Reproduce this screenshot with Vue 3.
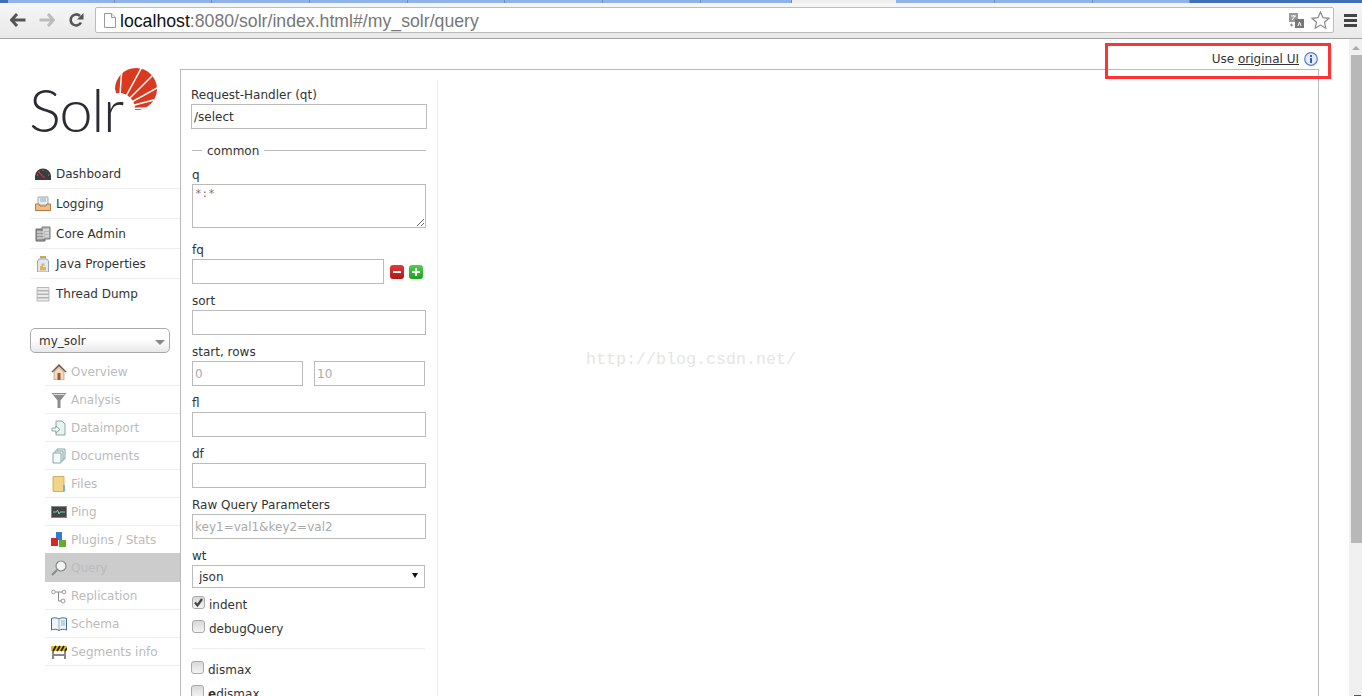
<template>
  <div class="page">
    <!-- browser chrome -->
    <div class="tabstrip">
      <span v-for="(t, i) in tabs" :key="i" class="tab" :class="t.kind" :style="{ width: t.w + 'px' }"></span>
    </div>
    <div class="toolbar">
      <svg class="tool" width="16" height="14" viewBox="0 0 16 14"><path d="M7 1 1.500 7 7 13M2 7h13.500" fill="none" stroke="#555" stroke-width="3"/></svg>
      <svg class="tool" width="16" height="14" viewBox="0 0 16 14"><path d="M9 1l5.500 6L9 13M14 7H.5" fill="none" stroke="#bbb" stroke-width="3"/></svg>
      <svg class="tool" width="16" height="16" viewBox="0 0 16 16"><path d="M13 10.500A5.500 5.500 0 1 1 12 4" fill="none" stroke="#555" stroke-width="2.600"/><path d="M15.500 1v6.500H9z" fill="#555"/></svg>
      <div class="omnibox">
        <svg width="12" height="15" viewBox="0 0 12 15"><path d="M.5.500h7l4 4v10H.5z" fill="#fff" stroke="#999"/><path d="M7.500.500v4h4" fill="#eee" stroke="#999"/></svg>
        <span class="url"><b>localhost</b>:8080/solr/index.html#/my_solr/query</span>
        <svg class="translate" width="15" height="15" viewBox="0 0 15 15"><rect x="0" y="0" width="9" height="9" fill="#999"/><rect x="6" y="6" width="9" height="9" fill="#777"/><path d="M2 3h5M4.500 2v1M3 7l3-4" stroke="#fff" fill="none"/><path d="M9 13l1.500-4 1.500 4" stroke="#fff" fill="none"/><path d="M1 12h3M2.500 10.500v3" stroke="#888"/></svg>
        <svg class="star" width="19" height="18" viewBox="0 0 19 18"><path d="M9.500 1l2.500 5.700 6 .6-4.500 4 1.300 5.900-5.300-3.100-5.300 3.100 1.300-5.900-4.500-4 6-.6z" fill="#fff" stroke="#888" stroke-width="1.200"/></svg>
      </div>
      <div class="menu"><i></i><i></i><i></i></div>
    </div>

    <div class="viewport">
      <div class="content">
        <div class="topbar">
          <span>Use <a>original UI</a></span>
          <svg width="14" height="14" viewBox="0 0 14 14"><circle cx="7" cy="7" r="6.300" fill="#e4ecfa" stroke="#5a7fd0" stroke-width="1.200"/><rect x="6" y="6" width="2" height="5" fill="#3a5fb0"/><rect x="6" y="3" width="2" height="2" fill="#3a5fb0"/></svg>
        </div>

        <div class="columns">
          <aside class="sidebar">
            <div class="logo">
              <svg class="sun" width="46" height="46" viewBox="0 0 46 46">
                <circle cx="23" cy="22" r="21" fill="#d9391f"/>
                <g stroke="#fff" stroke-width="1.500">
                  <path d="M6 42 9 0M6 42 30 -2M6 42 50 -2M6 42 60 12M6 42 60 28M6 42 60 40M6 42 -4 0"/>
                </g>
                <circle cx="6" cy="42" r="16" fill="#fff"/>
              </svg>
              <span class="logo-text">Solr</span>
            </div>

            <nav class="nav">
              <a v-for="item in mainNav" :key="item.label" class="nav-row">
                <svg width="16" height="16" viewBox="0 0 16 16" v-html="icons[item.icon]"></svg>
                {{ item.label }}
              </a>
            </nav>

            <div class="core-select">my_solr<span class="caret"></span></div>

            <nav class="subnav">
              <a v-for="item in coreNav" :key="item.label" class="sub-row" :class="{ active: item.active }">
                <svg width="16" height="16" viewBox="0 0 16 16" v-html="icons[item.icon]"></svg>
                {{ item.label }}
              </a>
            </nav>
          </aside>

          <main class="frame">
            <form class="query-form">
              <label class="request-label">Request-Handler (qt)</label>
              <input class="field request-input" type="text" value="/select" />

              <div class="legend"><span>common</span></div>

              <label class="tight">q</label>
              <textarea class="field query-text" spellcheck="false">*:*</textarea>

              <label class="loose">fq</label>
              <div class="fq-row">
                <input class="field fq-input" type="text" />
                <span class="square red"><i class="h"></i></span>
                <span class="square green"><i class="h"></i><i class="v"></i></span>
              </div>

              <label>sort</label>
              <input class="field" type="text" />

              <label>start, rows</label>
              <div class="start-rows">
                <input class="field" type="text" placeholder="0" />
                <input class="field" type="text" placeholder="10" />
              </div>

              <label>fl</label>
              <input class="field" type="text" />

              <label>df</label>
              <input class="field" type="text" />

              <label>Raw Query Parameters</label>
              <input class="field" type="text" placeholder="key1=val1&key2=val2" />

              <label>wt</label>
              <div class="wt-select">
                <select class="field">
                  <option>json</option>
                </select>
              </div>

              <div class="check-row first">
                <span class="box"><svg width="11" height="11" viewBox="0 0 11 11"><path d="M2 5.500 4.500 8.500 9 2" fill="none" stroke="#444" stroke-width="2.200"/></svg></span>indent
              </div>
              <div class="check-row"><span class="box"></span>debugQuery</div>

              <hr />

              <div class="check-row outdent"><span class="box"></span>dismax</div>
              <div class="check-row outdent"><span class="box"></span><span><b>e</b>dismax</span></div>
            </form>
          </main>
        </div>

        <div class="watermark">http://blog.csdn.net/</div>
        <div class="callout"></div>
      </div>

      <div class="scrollbar">
        <span class="arrow-up"></span>
        <span class="thumb"></span>
        <span class="arrow-down"></span>
      </div>
    </div>
  </div>
</template>

<script setup>
const tabs = [
  { w: 8, kind: 'dark' },
  { w: 107 }, { w: 97 }, { w: 98 }, { w: 98 }, { w: 97 }, { w: 98 }, { w: 98 }, { w: 91 },
  { w: 104, kind: 'gap' },
  { w: 99 }, { w: 98 }, { w: 97 },
  { w: 172, kind: 'dark' }
]

const mainNav = [
  { label: 'Dashboard', icon: 'dashboard' },
  { label: 'Logging', icon: 'logging' },
  { label: 'Core Admin', icon: 'cores' },
  { label: 'Java Properties', icon: 'java' },
  { label: 'Thread Dump', icon: 'threads' }
]

const coreNav = [
  { label: 'Overview', icon: 'house' },
  { label: 'Analysis', icon: 'funnel' },
  { label: 'Dataimport', icon: 'dataimport' },
  { label: 'Documents', icon: 'documents' },
  { label: 'Files', icon: 'folder' },
  { label: 'Ping', icon: 'ping' },
  { label: 'Plugins / Stats', icon: 'plugins' },
  { label: 'Query', icon: 'query', active: true },
  { label: 'Replication', icon: 'replication' },
  { label: 'Schema', icon: 'schema' },
  { label: 'Segments info', icon: 'segments' }
]

// small hand drawn versions of the solr admin icons
const icons = {
  dashboard: '<path d="M0 14V10a8 7.500 0 0 1 16 0v4z" fill="#3c3c40"/><path d="M3 5.500 9.500 12" stroke="#d03030" stroke-width="1.200"/><path d="M2 9h1M13 9h1M8 4v1M4 6h.5M11.500 6h.5" stroke="#999"/>',
  logging: '<path d="M3 1h10v8H3z" fill="#e8f0ee" stroke="#9aa"/><path d="M5 3h6M5 5h6" stroke="#9ab"/><path d="M.5 8H4l1 2h6l1-2h3.500v6.500H.5z" fill="#f0bc88" stroke="#b07a44"/>',
  cores: '<path d="M1 3h9v12H1z" fill="#999" stroke="#666"/><path d="M7 1h8v12H7z" fill="#bbb" stroke="#777"/><path d="M2 6h7M2 9h7M2 12h7M8 4h6M10 7h4M10 10h4" stroke="#eee"/>',
  java: '<path d="M5 0h6v2.500H5z" fill="#c9a860"/><path d="M4 3h8l1.500 2v11h-11V5z" fill="#dfe9f2" stroke="#9ab"/><path d="M5 10h3v4.500H5zM8 11h3v3.500H8zM6.500 7.500h3V10h-3z" fill="#e3b35a"/>',
  threads: '<path d="M2 1.500h12v3H2zM2 5h12v3H2zM2 8.500h12v3H2zM2 12h12v3H2z" fill="#ececec" stroke="#a8a8a8" stroke-width=".8"/>',
  house: '<path d="M8 0 .5 7.500l1 1L8 2.500l6.500 6 1-1z" fill="#7a5a44"/><path d="M3 8 8 3.500 13 8v8H3z" fill="#f2dcc0" stroke="#a08060" stroke-width=".6"/><path d="M6.500 9h3v7h-3z" fill="#a8542c"/>',
  funnel: '<path d="M.5 1h15L9.500 8.500V16h-3V8.500z" fill="#8c8c8c"/><path d="M2.500 2.500h11" stroke="#ddd"/>',
  dataimport: '<path d="M5 1h6l3 3v11H5z" fill="#e8f2ee" stroke="#8aa"/><path d="M1 8h4V6l4 3.500L5 13v-2H1z" fill="#f4f8f6" stroke="#7a9a94" stroke-width=".8"/>',
  documents: '<path d="M6 1h8v10H6z" fill="#e8f0ee" stroke="#8aa"/><path d="M4 3h8v10H4z" fill="#eef4f2" stroke="#8aa"/><path d="M2 5h8v10H2z" fill="#f4f8f8" stroke="#8aa"/>',
  folder: '<path d="M2 .5h11v15H2z" fill="#f2d488" stroke="#caa050" stroke-width=".8"/><path d="M12 9h2v6.500h-2z" fill="#7ab0d8"/>',
  ping: '<rect x=".5" y="2.500" width="15" height="11" fill="#444" stroke="#888"/><path d="M2 8h3.500l1-2 1.500 4 1-2h5" fill="none" stroke="#6fd0a8"/>',
  plugins: '<rect x="5" y="0" width="6" height="8" fill="#2f7fd0"/><rect x="0" y="6" width="7" height="8" fill="#d02a2a"/><rect x="8" y="8" width="7" height="7" fill="#66aa33"/>',
  query: '<circle cx="10" cy="6" r="5" fill="#f0f4f4" stroke="#888" stroke-width="1.200"/><path d="M6 10 1 15" stroke="#888" stroke-width="2"/>',
  replication: '<circle cx="2.500" cy="4" r="1.800" fill="#fff" stroke="#999"/><circle cx="13" cy="4" r="1.800" fill="#fff" stroke="#999"/><circle cx="12" cy="13" r="2" fill="#fff" stroke="#999"/><path d="M4.500 4H11M7.500 4v9h2.500" fill="none" stroke="#888"/>',
  schema: '<path d="M.5 2.500C3 1.500 6 1.500 8 3c2-1.500 5-1.500 7.500-.5V14c-2.500-1-5.500-1-7.500.5C6 13 3 13 .5 14z" fill="#eef4f8" stroke="#3a6a98"/><path d="M8 3v11M10 5h4M10 7h4M10 9h4" stroke="#9ab"/>',
  segments: '<path d="M2 7v8M14 7v8M2 11h12" stroke="#888" stroke-width="2" fill="none"/><rect x="0" y="2" width="16" height="5" fill="#e8b820"/><path d="M2 7l3-5M6 7l3-5M10 7l3-5M14 7l2-3" stroke="#222" stroke-width="1.800"/>'
}
</script>

<style>
html, body {
  margin: 0;
  height: 100%;
  overflow: hidden;
  background: #fff;
}
</style>

<style scoped>
.page {
  height: 696px;
  display: flex;
  flex-direction: column;
  font-family: "DejaVu Sans", sans-serif;
  font-size: 12px;
  color: #333;
  overflow: hidden;
}

.tabstrip {
  display: flex;
  height: 3px;
  background: #eee;
}
.tab {
  height: 3px;
  background: #8fb3e8;
  border-right: 1px solid #6a8cc0;
  box-sizing: border-box;
}
.tab.dark {
  background: #3f6fb8;
  border: 0;
}
.tab.gap {
  background: transparent;
  border: 0;
}

.toolbar {
  height: 36px;
  box-sizing: border-box;
  display: flex;
  align-items: center;
  padding: 0 5px 1px 10px;
  background: linear-gradient(#f6f6f6, #e9e9e9);
  border-bottom: 1px solid #a4a4a4;
}
.tool {
  margin-right: 13px;
}
.omnibox {
  margin-left: -2px;
  flex: 1;
  height: 26px;
  box-sizing: border-box;
  display: flex;
  align-items: center;
  padding: 0 3px 0 8px;
  background: #fff;
  border: 1px solid #bcbcbc;
  border-radius: 2px;
}
.url {
  margin-left: 4px;
  padding-top: 2px;
  flex: 1;
  font-family: "Liberation Sans", sans-serif;
  font-size: 17.700px;
  color: #777;
}
.url b {
  font-weight: normal;
  color: #111;
}
.translate {
  margin-right: 7px;
}
.menu {
  margin-left: 10px;
  width: 13px;
  display: flex;
  flex-direction: column;
  gap: 2px;
}
.menu i {
  height: 3px;
  background: #444;
}

.viewport {
  flex: 1;
  min-height: 0;
  display: flex;
}
.content {
  position: relative;
  flex: 1;
  min-width: 0;
}

.topbar {
  height: 30px;
  display: flex;
  align-items: center;
  justify-content: flex-end;
  gap: 5px;
  padding-right: 31px;
  padding-top: 9px;
  box-sizing: border-box;
}
.topbar a {
  color: #333;
  text-decoration: underline;
}

.columns {
  display: flex;
  height: 627px;
}
.sidebar {
  width: 180px;
  flex: none;
  box-sizing: border-box;
}
.logo {
  position: relative;
  height: 90px;
  padding-left: 30px;
}
.logo-text {
  position: absolute;
  left: 29px;
  top: 7px;
  font-family: Lato, sans-serif;
  font-weight: 300;
  font-size: 60px;
  line-height: 66px;
  color: #2b2b33;
  letter-spacing: -1.500px;
}
.sun {
  position: absolute;
  left: 113px;
  top: -2px;
}

.nav {
  margin-left: 30px;
}
.nav-row {
  height: 30px;
  box-sizing: border-box;
  display: flex;
  align-items: center;
  gap: 5px;
  padding-left: 5px;
  border-bottom: 1px solid #eee;
}
.nav-row:last-child {
  border-bottom: 0;
}

.core-select {
  position: relative;
  margin: 19px 0 0 30px;
  width: 140px;
  height: 25px;
  box-sizing: border-box;
  padding: 0 8px;
  line-height: 25px;
  border: 1px solid #aaa;
  border-radius: 5px;
  background: linear-gradient(#fff 45%, #e8e8e8);
}
.caret {
  position: absolute;
  right: 4px;
  top: 11px;
  border: 5px solid transparent;
  border-top-color: #888;
  border-bottom: 0;
}

.subnav {
  margin: 5px 0 0 45px;
}
.sub-row {
  height: 28px;
  box-sizing: border-box;
  display: flex;
  align-items: center;
  gap: 4px;
  padding-left: 6px;
  color: #bbb;
  border-bottom: 1px solid #eee;
}
.sub-row.active {
  background: #ccc;
  box-shadow: 0 -1px #ccc;
  border-bottom-color: #ccc;
}

.frame {
  width: 1139px;
  flex: none;
  box-sizing: border-box;
  border: 1px solid #bbb;
  border-bottom: 0;
  overflow: hidden;
}
.query-form {
  width: 257px;
  box-sizing: border-box;
  margin-top: 10px;
  padding: 4px 0 0 11px;
  border-right: 1px solid #eee;
  height: 620px;
}
.query-form label {
  display: block;
  height: 20px;
  line-height: 22px;
  margin-top: 6px;
}
.query-form label.request-label {
  margin: 0 0 0 -1px;
}
.query-form label.tight {
  margin-top: 4px;
}
.query-form label.loose {
  margin-top: 11px;
}

.field {
  display: block;
  width: 234px;
  height: 25px;
  box-sizing: border-box;
  margin: 0;
  padding: 0 2px;
  font: inherit;
  color: #333;
  background: #fff;
  border: 1px solid #bbb;
  border-radius: 0;
  outline: 0;
}
.field::placeholder {
  color: #aaa;
}
.request-input {
  width: 236px;
  margin-left: -1px;
}

.legend {
  display: flex;
  align-items: center;
  height: 20px;
  margin: 11px 0 0;
  width: 234px;
}
.legend::before {
  content: "";
  width: 10px;
  border-top: 1px solid #bbb;
}
.legend::after {
  content: "";
  flex: 1;
  border-top: 1px solid #bbb;
}
.legend span {
  padding: 0 5px;
  margin-top: 2px;
}

.query-text {
  height: 44px;
  padding: 2px 2px;
  resize: vertical;
  font-family: "DejaVu Sans Mono", monospace;
  font-size: 11px;
  color: #8c6f66;
}

.fq-row {
  display: flex;
  align-items: center;
}
.fq-input {
  width: 192px;
  margin-right: 6px;
}
.square {
  position: relative;
  width: 14px;
  height: 14px;
  border-radius: 3px;
  margin-right: 5px;
}
.square.red {
  background: linear-gradient(#e23a3a, #b01818);
}
.square.green {
  background: linear-gradient(#4fd04f, #1fa01f);
}
.square i {
  position: absolute;
  background: #fff;
}
.square i.h {
  left: 3px;
  right: 3px;
  top: 6px;
  height: 2px;
}
.square i.v {
  top: 3px;
  bottom: 3px;
  left: 6px;
  width: 2px;
}

.start-rows {
  display: flex;
  gap: 11px;
}
.start-rows .field {
  width: 111px;
}

.wt-select {
  position: relative;
  width: 233px;
}
.wt-select::after {
  content: "";
  position: absolute;
  right: 7px;
  top: 8px;
  border: 3px solid transparent;
  border-top: 5px solid #111;
  border-bottom: 0;
}
.wt-select select {
  width: 233px;
  height: 23px;
  padding: 0 6px;
  appearance: none;
}

.check-row {
  display: flex;
  align-items: center;
  gap: 4px;
  height: 24px;
  box-sizing: border-box;
  padding-top: 2px;
}
.check-row.first {
  margin-top: 4px;
}
.check-row.outdent {
  margin-left: -1px;
}
.check-row b {
  font-weight: bold;
}
.box {
  width: 13px;
  height: 13px;
  box-sizing: border-box;
  flex: none;
  display: flex;
  align-items: center;
  justify-content: center;
  margin-top: -6px;
  border: 1px solid #aaa;
  border-radius: 3px;
  background: linear-gradient(#d8d8d8, #f4f4f4);
}

hr {
  width: 233px;
  margin: 8px 0 8px;
  border: 0;
  border-top: 1px solid #eee;
}

.watermark {
  position: absolute;
  left: 586px;
  top: 311px;
  font-family: "Liberation Mono", monospace;
  font-size: 16.670px;
  line-height: 20px;
  color: #e6e6e0;
}
.callout {
  position: absolute;
  left: 1105px;
  top: 4px;
  width: 226px;
  height: 36px;
  box-sizing: border-box;
  border: 3px solid #f33;
}

.scrollbar {
  width: 13px;
  flex: none;
  display: flex;
  flex-direction: column;
  align-items: flex-end;
  background: #f0f0f0;
}
.arrow-up {
  margin: 7px 2px 0 0;
  border: 4px solid transparent;
  border-bottom: 4px solid #aaa;
  border-top: 0;
}
.thumb {
  margin-top: 5px;
  width: 11px;
  height: 488px;
  background: #b8b8b8;
}
.arrow-down {
  margin: auto 1px 0 0;
  width: 7px;
  height: 1px;
  background: #555;
}
</style>
